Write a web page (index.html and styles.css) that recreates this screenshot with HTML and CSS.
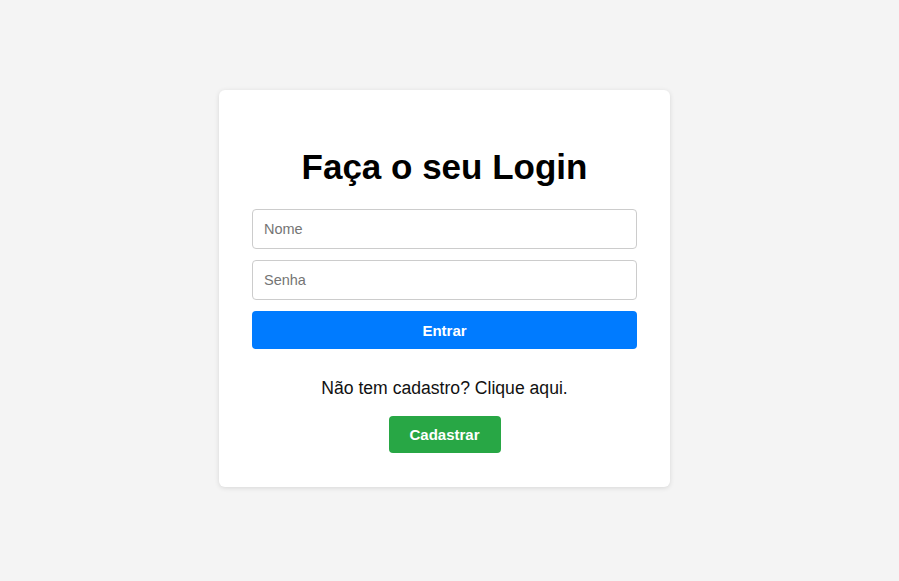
FILE: index.html
```html
<!DOCTYPE html>
<html lang="pt">
<head>
<meta charset="utf-8">
<title>Login</title>
<link rel="stylesheet" href="styles.css">
</head>
<body>
<main class="page">
  <div class="card">
    <h1 class="title">Faça o seu Login</h1>
    <form class="form">
      <input class="field" type="text" placeholder="Nome">
      <input class="field" type="password" placeholder="Senha">
      <button class="btn btn-primary" type="button">Entrar</button>
    </form>
    <p class="hint">Não tem cadastro? Clique aqui.</p>
    <button class="btn btn-success" type="button">Cadastrar</button>
  </div>
</main>
</body>
</html>
```

FILE: styles.css
```css
* { box-sizing: border-box; }
html, body { margin: 0; padding: 0; }
body {
  background: #f4f4f4;
  font-family: "Liberation Sans", Arial, sans-serif;
  color: #111;
}
.page {
  display: flex;
  justify-content: center;
  align-items: flex-start;
  padding: 90px 10px 0 0;
  min-height: 581px;
}
.card {
  width: 451px;
  background: #fff;
  border-radius: 6px;
  box-shadow: 0 1px 5px rgba(0,0,0,0.12);
  padding: 33px 33px 34px;
  display: flex;
  flex-direction: column;
  align-items: center;
}
.title {
  font-size: 35px;
  font-weight: bold;
  margin: 23px 0 22px;
  line-height: 41px;
  color: #000;
}
.form {
  width: 100%;
  display: flex;
  flex-direction: column;
  gap: 11px;
}
.field {
  width: 100%;
  height: 40px;
  border: 1px solid #ccc;
  border-radius: 4px;
  padding: 0 11px;
  font-family: "Liberation Sans", Arial, sans-serif;
  font-size: 14.5px;
  color: #333;
  background: #fff;
}
.field::placeholder { color: #757575; }
.btn {
  border: none;
  border-radius: 4px;
  color: #fff;
  font-family: "Liberation Sans", Arial, sans-serif;
  font-weight: bold;
  font-size: 15px;
  cursor: pointer;
}
.btn-primary {
  width: 100%;
  height: 38px;
  background: #007bff;
}
.btn-success {
  width: 112px;
  height: 37px;
  background: #28a745;
}
.hint {
  font-size: 17.6px;
  margin: 29px 0 18px;
  line-height: 20px;
  color: #111;
}
```
